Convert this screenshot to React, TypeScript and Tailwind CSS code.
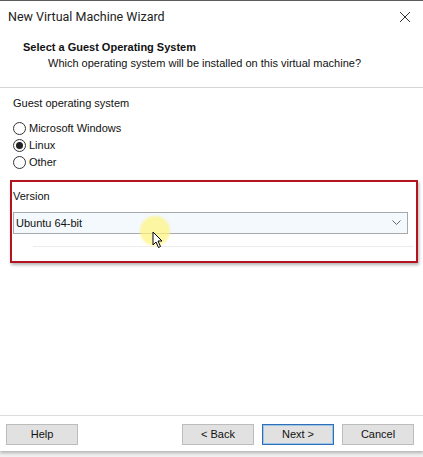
import { useState } from "react";

const OS_OPTIONS = ["Microsoft Windows", "Linux", "Other"];

function Radio({ label, checked, onClick }: { label: string; checked: boolean; onClick: () => void }) {
  return (
    <button onClick={onClick} className="flex items-center h-[17px] gap-[3px] text-left">
      <span className="w-[13px] h-[13px] rounded-full border border-[#333] bg-white flex items-center justify-center">
        {checked && <span className="w-[7px] h-[7px] rounded-full bg-[#222]" />}
      </span>
      <span>{label}</span>
    </button>
  );
}

function WinButton({ label, primary }: { label: string; primary?: boolean }) {
  return (
    <button
      className={`w-[72px] h-[21px] bg-[#e1e1e1] text-[#111] border ${primary ? "border-[#2f6fb5] shadow-[inset_0_0_0_1px_#9cc3e8]" : "border-[#bcbcbc]"}`}
    >
      {label}
    </button>
  );
}

export default function App() {
  const [os, setOs] = useState("Linux");

  return (
    <div
      className="w-[423px] h-[457px] bg-[#f0f0f0] text-[11px] text-[#111] flex flex-col overflow-hidden"
      style={{ fontFamily: "Tahoma, 'Liberation Sans', Arial, sans-serif" }}
    >
      <div className="bg-white flex flex-col h-[451px] border-t border-[#5c5c5c] shadow-[0_2px_3px_rgba(0,0,0,0.25)]">
        {/* Title bar */}
        <div className="h-[32px] flex items-center justify-between pl-[8px] pr-[12px]">
          <span className="text-[12.5px] text-[#222]" style={{ fontFamily: "Roboto, 'Liberation Sans', sans-serif" }}>
            New Virtual Machine Wizard
          </span>
          <svg width="12" height="12" viewBox="0 0 12 12" className="text-[#333]">
            <path d="M1 1 L11 11 M11 1 L1 11" stroke="currentColor" strokeWidth="1" />
          </svg>
        </div>

        {/* Header */}
        <div className="h-[55px] border-b border-[#d4d4d4] pl-[23px] pt-[6px]">
          <div className="font-bold leading-[16px]">Select a Guest Operating System</div>
          <div className="pl-[25px] leading-[16px]">Which operating system will be installed on this virtual machine?</div>
        </div>

        {/* Body */}
        <div className="flex-1 pl-[10px] pr-[5px] pt-[8px] flex flex-col">
          <div className="pl-[3px] leading-[14px]">Guest operating system</div>
          <div className="pl-[3px] mt-[10px] flex flex-col gap-0">
            {OS_OPTIONS.map(o => (
              <Radio key={o} label={o} checked={os === o} onClick={() => setOs(o)} />
            ))}
          </div>

          <div className="mt-[9px] h-[83px] border-2 border-[#b3141f] shadow-[1px_2px_3px_rgba(0,0,0,0.3)] pl-[1px] pr-[8px] pt-[7px] flex flex-col">
            <div className="leading-[14px]">Version</div>
            <div className="relative mt-[9px] h-[22px] bg-[#f3f9fd] border border-[#a8a8a8] flex items-center justify-between pl-[2px] pr-[6px]">
              <span>Ubuntu 64-bit</span>
              <svg width="9" height="6" viewBox="0 0 9 6" className="text-[#666]">
                <path d="M0.5 0.5 L4.5 4.5 L8.5 0.5" fill="none" stroke="currentColor" strokeWidth="1" />
              </svg>
              {/* pointer highlight */}
              <div className="absolute left-[126px] top-[3px] w-[30px] h-[30px] rounded-full bg-[#fff47a]/70 blur-[1px]" />
              <svg width="12" height="18" viewBox="0 0 12 18" className="absolute left-[138px] top-[18px]">
                <path d="M1 1 L1 14 L4 11 L6.5 16.5 L8.5 15.5 L6 10 L10 10 Z" fill="white" stroke="black" strokeWidth="1" strokeLinejoin="round" />
              </svg>
            </div>
            <div className="ml-[20px] -mr-[6px] mt-[12px] border-t border-[#ececec]" />
          </div>
        </div>

        {/* Footer */}
        <div className="border-t border-[#dcdcdc] h-[36px] flex items-center pl-[6px] pr-[9px] pt-[1px]">
          <WinButton label="Help" />
          <div className="flex-1" />
          <div className="flex gap-[8px]">
            <WinButton label="< Back" />
            <WinButton label="Next >" primary />
            <WinButton label="Cancel" />
          </div>
        </div>
      </div>
    </div>
  );
}
